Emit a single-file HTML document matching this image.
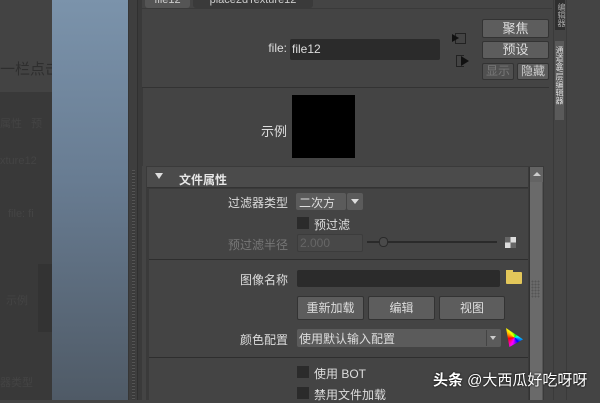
<!DOCTYPE html>
<html><head><meta charset="utf-8"><style>
*{margin:0;padding:0;box-sizing:border-box}
body{width:600px;height:400px;overflow:hidden;background:#444;position:relative;font-family:"Liberation Sans","Noto Sans CJK SC",sans-serif;font-size:12px;color:#ddd}
.a{position:absolute}
.btn{position:absolute;background:#5d5d5d;border:1px solid #333;border-radius:2px;color:#ddd;text-align:center;font-size:12px}
.lbl{position:absolute;text-align:right;color:#ddd;font-size:12px}
.fld{position:absolute;background:#2b2b2b;border-radius:2px}
.cb{position:absolute;width:12px;height:12px;background:#2b2b2b}
.ln{position:absolute;height:1px;background:#2e2e2e}
</style></head><body>
<div class="a" style="left:0;top:0;width:52px;height:92px;background:#434343"></div>
<div class="a" style="left:0;top:92px;width:52px;height:308px;background:#393939"></div>
<div class="a" style="left:0;top:58px;color:#2e2e2e;font-size:15px;white-space:nowrap">一栏点击</div>
<div class="a" style="left:0;top:115px;color:#444;font-size:11px;white-space:nowrap">属性&nbsp;&nbsp; 预</div>
<div class="a" style="left:0;top:155px;color:#444;font-size:11px;white-space:nowrap">xture12</div>
<div class="a" style="left:8px;top:208px;color:#444;font-size:11px;white-space:nowrap">file: fi</div>
<div class="a" style="left:38px;top:264px;width:14px;height:68px;background:#333"></div>
<div class="a" style="left:6px;top:292px;color:#444;font-size:11px">示例</div>
<div class="a" style="left:0;top:374px;color:#444;font-size:11px;white-space:nowrap">器类型</div>
<div class="a" style="left:52px;top:0;width:76px;height:400px;background:linear-gradient(#7b93ab,#687c92 45%,#4f5a66)"></div>
<div class="a" style="left:128px;top:0;width:10px;height:400px;background:#3e3e3e;border-left:1px solid #363636;border-right:1px solid #303030"></div>
<div class="a" style="left:132px;top:170px;width:3px;height:230px;background:repeating-linear-gradient(#555 0 1px,#3a3a3a 1px 3px)"></div>
<div class="a" style="left:138px;top:0;width:4px;height:400px;background:#3a3a3a"></div>
<div class="a" style="left:145px;top:-6px;width:45px;height:14px;background:#555;border-radius:3px;color:#ccc;font-size:11px;text-align:center;line-height:12px">file12</div>
<div class="a" style="left:193px;top:-6px;width:120px;height:14px;background:#3a3a3a;border-radius:3px;color:#ccc;font-size:11px;text-align:center;line-height:12px">place2dTexture12</div>
<div class="ln" style="left:142px;top:8px;width:410px;background:#3a3a3a"></div>
<div class="lbl" style="left:240px;top:41px;width:47px">file:</div>
<div class="fld" style="left:290px;top:39px;width:150px;height:21px;color:#ddd;padding:3px 2px">file12</div>
<div class="a" style="left:455px;top:33px;width:11px;height:11px;border:1px solid #222"></div>
<div class="a" style="left:452px;top:34px;width:0;height:0;border-left:7px solid #111;border-top:4px solid transparent;border-bottom:4px solid transparent"></div>
<div class="a" style="left:456px;top:55px;width:8px;height:12px;border:1px solid #222;border-right:none"></div>
<div class="a" style="left:461px;top:56px;width:0;height:0;border-left:8px solid #111;border-top:5px solid transparent;border-bottom:5px solid transparent"></div>
<div class="btn" style="left:482px;top:19px;width:67px;height:19px;line-height:17px;font-size:13px">聚焦</div>
<div class="btn" style="left:482px;top:41px;width:67px;height:18px;line-height:16px;font-size:13px">预设</div>
<div class="btn" style="left:482px;top:63px;width:32px;height:17px;line-height:15px;color:#777;background:#505050">显示</div>
<div class="btn" style="left:517px;top:63px;width:32px;height:17px;line-height:15px;color:#ccc">隐藏</div>
<div class="ln" style="left:142px;top:87px;width:407px;background:#333"></div>
<div class="a" style="left:142px;top:88px;width:407px;height:78px;border-left:1px solid #3a3a3a"></div>
<div class="lbl" style="left:240px;top:121px;width:47px;font-size:13px">示例</div>
<div class="a" style="left:292px;top:95px;width:63px;height:63px;background:#000"></div>
<div class="a" style="left:146px;top:166px;width:398px;height:234px;background:#3a3a3a"></div>
<div class="a" style="left:147px;top:167px;width:381px;height:21px;background:#4b4b4b;border-bottom:1px solid #333"></div>
<div class="a" style="left:155px;top:173px;width:0;height:0;border-top:6px solid #ddd;border-left:4px solid transparent;border-right:4px solid transparent"></div>
<div class="a" style="left:179px;top:171px;font-weight:bold;font-size:12px;color:#e6e6e6">文件属性</div>
<div class="a" style="left:149px;top:189px;width:379px;height:211px;background:#444"></div>
<div class="a" style="left:529px;top:167px;width:14px;height:233px;background:#555;border-left:1px solid #333"></div>
<div class="a" style="left:530px;top:167px;width:13px;height:15px;background:#636363"></div>
<div class="a" style="left:533px;top:172px;width:0;height:0;border-bottom:4px solid #ccc;border-left:4px solid transparent;border-right:4px solid transparent"></div>
<div class="a" style="left:530px;top:182px;width:12px;height:218px;background:#6a6a6a"></div>
<div class="a" style="left:531px;top:280px;width:9px;height:18px;background:radial-gradient(#555 40%,transparent 45%) 0 0/3px 3px"></div>
<div class="lbl" style="left:200px;top:194px;width:88px">过滤器类型</div>
<div class="fld" style="left:296px;top:193px;width:50px;height:17px;background:#5b5b5b;padding:1px 3px">二次方</div>
<div class="fld" style="left:347px;top:193px;width:16px;height:17px;background:#5b5b5b"></div>
<div class="a" style="left:351px;top:199px;width:0;height:0;border-top:5px solid #ddd;border-left:4px solid transparent;border-right:4px solid transparent"></div>
<div class="cb" style="left:297px;top:217px"></div>
<div class="a" style="left:314px;top:216px">预过滤</div>
<div class="lbl" style="left:200px;top:236px;width:88px;color:#777">预过滤半径</div>
<div class="fld" style="left:297px;top:234px;width:66px;height:18px;background:#484848;border:1px solid #3c3c3c;color:#666;padding:1px 2px">2.000</div>
<div class="a" style="left:367px;top:241px;width:130px;height:2px;background:#2a2a2a"></div>
<div class="a" style="left:379px;top:237px;width:9px;height:10px;border-radius:4px;background:#4a4a4a;border:1px solid #2a2a2a"></div>
<div class="a" style="left:505px;top:237px;width:11px;height:11px;background:conic-gradient(#ddd 0 25%,#666 0 50%,#ddd 0 75%,#666 0)"></div>
<div class="ln" style="left:149px;top:259px;width:379px"></div>
<div class="lbl" style="left:200px;top:271px;width:88px">图像名称</div>
<div class="fld" style="left:297px;top:270px;width:203px;height:17px"></div>
<div class="a" style="left:506px;top:272px;width:16px;height:12px;background:#e3c75a;border-radius:1px"></div>
<div class="a" style="left:506px;top:270px;width:7px;height:3px;background:#e3c75a"></div>
<div class="btn" style="left:297px;top:296px;width:67px;height:24px;line-height:22px">重新加载</div>
<div class="btn" style="left:368px;top:296px;width:67px;height:24px;line-height:22px">编辑</div>
<div class="btn" style="left:439px;top:296px;width:66px;height:24px;line-height:22px">视图</div>
<div class="lbl" style="left:200px;top:331px;width:88px">颜色配置</div>
<div class="fld" style="left:297px;top:329px;width:204px;height:18px;background:#5b5b5b;padding:1px 2px">使用默认输入配置</div>
<div class="a" style="left:486px;top:330px;width:1px;height:16px;background:#444"></div>
<div class="a" style="left:490px;top:336px;width:0;height:0;border-top:4px solid #ccc;border-left:3px solid transparent;border-right:3px solid transparent"></div>
<div class="a" style="left:506px;top:328px;width:17px;height:19px;background:conic-gradient(from 200deg,#f0f,#f00,#ff0,#0f0,#0ff,#00f,#f0f);clip-path:polygon(0 0,100% 60%,20% 100%)"></div>
<div class="ln" style="left:149px;top:357px;width:379px"></div>
<div class="cb" style="left:297px;top:366px"></div>
<div class="a" style="left:314px;top:365px">使用 BOT</div>
<div class="cb" style="left:297px;top:387px"></div>
<div class="a" style="left:314px;top:386px">禁用文件加载</div>
<div class="a" style="left:553px;top:0;width:47px;height:400px;background:#444;border-left:1px solid #3a3a3a"></div>
<div class="a" style="left:555px;top:0;width:10px;height:30px;background:#2f2f2f"></div>
<div class="a" style="left:555px;top:41px;width:9px;height:79px;background:#5a5a5a"></div>
<div class="a" style="left:556px;top:3px;writing-mode:vertical-rl;font-size:8px;color:#aaa">编辑器</div>
<div class="a" style="left:555px;top:46px;writing-mode:vertical-rl;font-size:8px;color:#ddd;line-height:9px">通道盒/层编辑器</div>
<div class="a" style="left:566px;top:0;width:1px;height:400px;background:#3a3a3a"></div>
<div class="a" style="left:433px;top:369px;font-size:15px;color:#fff;white-space:nowrap;text-shadow:0 0 2px #000"><b>头条</b> @大西瓜好吃呀呀</div>
</body></html>
